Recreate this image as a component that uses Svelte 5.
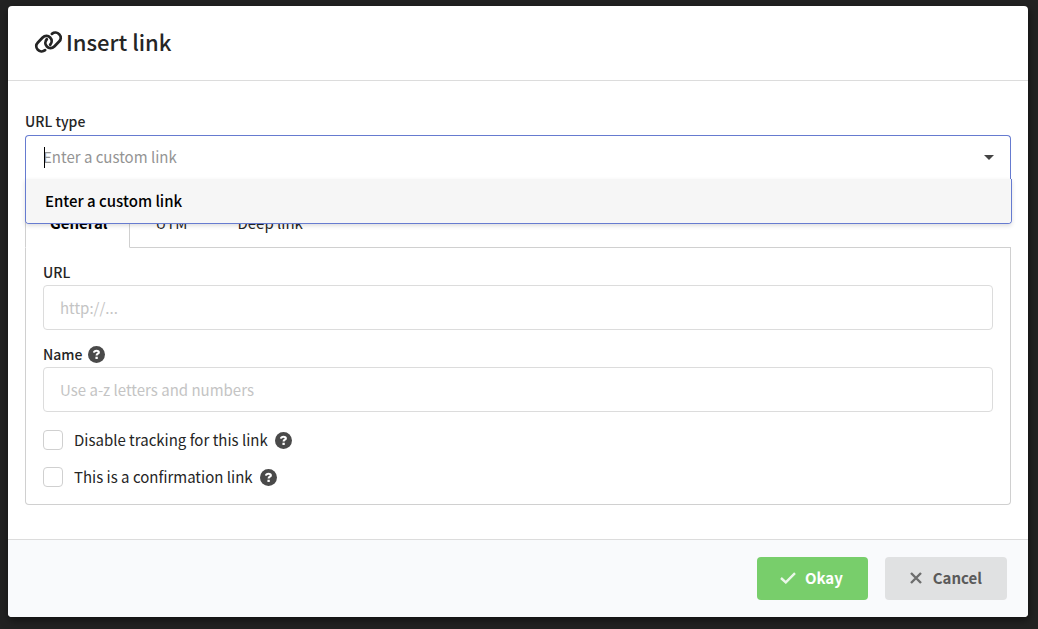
<script lang="ts">
  type Tab = { id: string; label: string };

  const tabs: Tab[] = [
    { id: 'general', label: 'General' },
    { id: 'utm', label: 'UTM' },
    { id: 'deep', label: 'Deep link' }
  ];
  const urlTypes = ['Enter a custom link'];

  let activeTab = $state('general');
  let menuOpen = $state(true);
  let urlType = $state('');
  let url = $state('');
  let name = $state('');
  let disableTracking = $state(false);
  let confirmation = $state(false);

  function pick(type: string) {
    urlType = type;
    menuOpen = false;
  }
</script>

{#snippet help()}
  <svg class="help" viewBox="0 0 16 16" role="img" aria-label="Help">
    <circle cx="8" cy="8" r="8" fill="#4a4a4a" />
    <path d="M5.6 6.300C5.800 5 6.700 4.500 8 4.500c1.300 0 2.200.6 2.200 1.500 0 1.300-2.100 1.300-2.100 2.900" fill="none" stroke="#fff" stroke-width="2" />
    <rect x="7" y="10.1" width="2.200" height="2.100" fill="#fff" />
  </svg>
{/snippet}

<div class="modal" role="dialog" aria-labelledby="title">
  <header>
    <svg class="link-icon" viewBox="0 0 28 24" aria-hidden="true">
      <g fill="none" stroke="#252525" stroke-width="2.8" stroke-linecap="round">
        <path d="M10.600 20.200C8.200 22 5 21.600 3.200 19.600c-2-2.200-1.800-5.200.2-7.200L8.200 7.600c2.200-2.200 5.400-2.200 7.400-.2s2 5.200.1 7.300" />
        <path d="M17.400 3.800C19.800 2 23 2.400 24.800 4.400c2 2.200 1.800 5.200-.2 7.200l-4.800 4.800c-2.200 2.200-5.400 2.200-7.400.2s-2-5.200-.1-7.300" />
      </g>
    </svg>
    <h1 id="title">Insert link</h1>
  </header>

  <div class="content">
    <label class="field-label" for="url-type">URL type</label>
    <div class="select" class:open={menuOpen}>
      <input
        id="url-type"
        role="combobox"
        aria-expanded={menuOpen}
        aria-controls="url-type-menu"
        placeholder="Enter a custom link"
        autocomplete="off"
        bind:value={urlType}
        onfocus={() => (menuOpen = true)}
      />
      {#if menuOpen}
        <span class="caret"></span>
      {/if}
      <svg class="arrow" viewBox="0 0 10 5" aria-hidden="true"><path d="M0 0h10L5 5z" fill="#444" /></svg>
      {#if menuOpen}
        <div class="menu" id="url-type-menu" role="listbox">
          {#each urlTypes as type}
            <button type="button" role="option" aria-selected="true" onclick={() => pick(type)}>{type}</button>
          {/each}
        </div>
      {/if}
    </div>

    <div class="tabs" role="tablist">
      {#each tabs as tab}
        <button
          type="button"
          class="tab"
          class:active={activeTab === tab.id}
          role="tab"
          aria-selected={activeTab === tab.id}
          onclick={() => (activeTab = tab.id)}
        >{tab.label}</button>
      {/each}
    </div>

    <div class="panel">
      <label class="field-label" for="url">URL</label>
      <input class="text" id="url" placeholder="http://..." bind:value={url} />
      <label class="field-label" for="name">Name {@render help()}</label>
      <input class="text" id="name" placeholder="Use a-z letters and numbers" bind:value={name} />
      <label class="check">
        <input type="checkbox" bind:checked={disableTracking} />
        Disable tracking for this link
        {@render help()}
      </label>
      <label class="check">
        <input type="checkbox" bind:checked={confirmation} />
        This is a confirmation link
        {@render help()}
      </label>
    </div>
  </div>

  <footer>
    <button type="button" class="btn primary">
      <svg viewBox="0 0 16 12" width="16" height="12" aria-hidden="true">
        <path d="M1 6 5.800 10.400 15 1.200" fill="none" stroke="#fff" stroke-width="2.400" />
      </svg>
      Okay
    </button>
    <button type="button" class="btn">
      <svg viewBox="0 0 16 12" width="16" height="12" aria-hidden="true">
        <path d="M3 1l10 10M13 1L3 11" fill="none" stroke="#5a5a5a" stroke-width="2.400" />
      </svg>
      Cancel
    </button>
  </footer>
</div>

<style>
  :global(body) {
    background: #222;
  }
  .modal {
    margin: 6px 10px 12px 8px;
    background: #fff;
    border-radius: 4px;
    box-shadow: 1px 3px 8px rgba(0, 0, 0, 0.5);
    overflow: hidden;
    color: #252525;
    font: 15px/22px "Noto Sans CJK SC", "Source Sans Pro", sans-serif;
  }
  .modal * {
    box-sizing: border-box;
  }
  button,
  input {
    font: inherit;
    color: inherit;
  }
  button {
    cursor: pointer;
  }

  header {
    display: flex;
    align-items: flex-start;
    gap: 3px;
    padding: 19px 26px 23px;
    border-bottom: 1px solid #dcdcdc;
  }
  .link-icon {
    width: 29px;
    height: 24px;
    margin-top: 5px;
  }
  h1 {
    margin: 0;
    font-size: 22px;
    line-height: 32px;
    font-weight: 500;
  }

  .content {
    padding: 28px 17px 34px;
  }
  .content > .field-label {
    height: 26px;
    padding-bottom: 2px;
  }
  .field-label {
    display: flex;
    align-items: center;
    gap: 6px;
    height: 24px;
    font-size: 14px;
    font-weight: 500;
  }
  .help {
    width: 17px;
    height: 17px;
  }

  .select {
    position: relative;
    display: flex;
    align-items: center;
    height: 45px;
    padding: 0 16px 0 17px;
    border: 1px solid #667bd0;
    border-radius: 4px;
  }
  .select.open {
    border-bottom-color: transparent;
    border-radius: 4px 4px 0 0;
  }
  .select input {
    flex: 1;
    min-width: 0;
    padding: 0 0 2px;
    border: 0;
    outline: 0;
    background: none;
  }
  .select input::placeholder {
    color: #949494;
    opacity: 1;
  }
  .caret {
    position: absolute;
    left: 18px;
    top: 11px;
    width: 1px;
    height: 21px;
    background: #000;
  }
  .arrow {
    width: 10px;
    height: 5px;
  }
  .menu {
    position: absolute;
    z-index: 1;
    top: 43px;
    left: -1px;
    right: -2px;
    border: 1px solid #667bd0;
    border-top: 0;
    border-radius: 0 0 4px 4px;
    box-shadow: 0 2px 4px rgba(34, 36, 38, 0.15);
    overflow: hidden;
  }
  .menu button {
    display: block;
    width: 100%;
    height: 44px;
    padding: 0 19px;
    border: 0;
    background: #f6f6f6;
    color: #000;
    font-weight: 500;
    text-align: left;
  }

  .tabs {
    display: flex;
    margin-top: 20px;
  }
  .tabs::after {
    content: "";
    flex: 1;
    border-bottom: 1px solid #d0d0d0;
  }
  .tab {
    height: 48px;
    padding: 0 25px 2px;
    border: 0;
    border-bottom: 1px solid #d0d0d0;
    background: none;
  }
  .tab.active {
    padding: 0 22px 2px 24px;
    border: 1px solid #d0d0d0;
    border-bottom-color: transparent;
    border-radius: 4px 4px 0 0;
    color: #000;
    font-weight: 700;
  }

  .panel {
    padding: 12px 17px 17px;
    border: 1px solid #d0d0d0;
    border-top: 0;
    border-radius: 0 0 4px 4px;
  }
  .text {
    display: block;
    width: 100%;
    height: 45px;
    margin: 1px 0 12px;
    padding: 0 16px 1px;
    border: 1px solid #dcdcdc;
    border-radius: 4px;
    background: #fff;
  }
  .text::placeholder {
    color: #c4c4c4;
    opacity: 1;
  }
  .check {
    display: flex;
    align-items: center;
    gap: 7px;
    height: 20px;
    margin-top: 17px;
  }
  .text + .check {
    margin-top: 18px;
  }
  .check input {
    appearance: none;
    width: 20px;
    height: 20px;
    margin: 0 4px 0 0;
    border: 1px solid #d0d0d0;
    border-radius: 4px;
    background: #fff;
  }
  .check input:checked {
    background: #667bd0;
  }

  footer {
    display: flex;
    justify-content: flex-end;
    gap: 17px;
    padding: 17px 21px;
    border-top: 1px solid #dcdcdc;
    background: #f9fafc;
  }
  .btn {
    display: flex;
    align-items: center;
    gap: 9px;
    height: 43px;
    padding: 0 25px 2px 23px;
    border: 0;
    border-radius: 4px;
    background: #e0e1e2;
    color: #5a5a5a;
    font-weight: 700;
  }
  .btn svg {
    opacity: 0.85;
  }
  .btn.primary {
    background: #78ce6b;
    color: #fff;
  }
</style>
